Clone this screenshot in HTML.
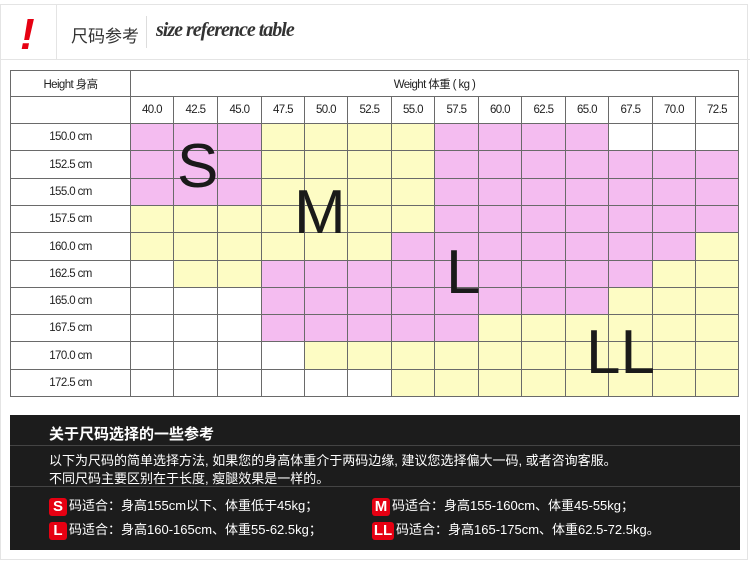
<!DOCTYPE html>
<html><head><meta charset="utf-8"><style>
body{margin:0;width:750px;height:565px;background:#fff;position:relative;overflow:hidden;font-family:"Liberation Sans","Noto Sans CJK SC",sans-serif;}
.frame{position:absolute;left:0;top:4px;width:748px;height:556px;border:1px solid #e4e4e4;box-sizing:border-box}
.hdrline{position:absolute;left:0;top:59px;width:750px;height:1px;background:#e4e4e4}
.c{position:absolute;box-sizing:border-box;border-right:1px solid #6a6a6a;border-bottom:1px solid #6a6a6a;font-size:11.5px;color:#222;display:flex;align-items:center;justify-content:center;letter-spacing:-0.6px}
.big{position:absolute;font-size:62px;color:#1a1a1a;line-height:1}
.dark{position:absolute;left:10px;top:415px;width:730px;height:135px;background:#1c1c1c;color:#fff}
.tag{display:inline-block;background:#e60012;color:#fff;font-weight:bold;border-radius:3px;width:18px;height:18px;text-align:center;line-height:18px;font-size:15px;margin-right:2px;vertical-align:middle}
.ln{position:absolute;font-size:13px;white-space:nowrap}
</style></head><body>
<div class="frame"></div>
<div class="hdrline"></div>
<div style="position:absolute;left:20px;top:13px;font-size:44px;color:#e60012;font-weight:bold;font-style:italic;line-height:1">!</div>
<div style="position:absolute;left:56px;top:5px;width:1px;height:54px;background:#e4e4e4"></div>
<div style="position:absolute;left:71px;top:22px;font-size:17px;color:#333">尺码参考</div>
<div style="position:absolute;left:146px;top:16px;width:1px;height:32px;background:#ddd"></div>
<div style="position:absolute;left:156px;top:19px;font-size:20px;color:#333;font-style:italic;font-weight:bold;font-family:'Liberation Serif',serif;letter-spacing:-1px">size reference table</div>
<div id="t"></div>
<div class="big" style="left:177px;top:136px">S</div>
<div class="big" style="left:294px;top:182px">M</div>
<div class="big" style="left:446px;top:242px">L</div>
<div class="big" style="left:586px;top:322px">LL</div>
<div class="dark">
<div style="position:absolute;left:39px;top:8px;font-size:15px;font-weight:bold">关于尺码选择的一些参考</div>
<div style="position:absolute;left:0;top:30px;width:730px;height:1px;background:#444"></div>
<div class="ln" style="left:39px;top:35px">以下为尺码的简单选择方法, 如果您的身高体重介于两码边缘, 建议您选择偏大一码, 或者咨询客服。</div>
<div class="ln" style="left:39px;top:53px">不同尺码主要区别在于长度, 瘦腿效果是一样的。</div>
<div style="position:absolute;left:0;top:71px;width:730px;height:1px;background:#444"></div>
<div class="ln" style="left:39px;top:80px"><span class="tag">S</span>码适合：身高155cm以下、体重低于45kg；</div>
<div class="ln" style="left:39px;top:104px"><span class="tag">L</span>码适合：身高160-165cm、体重55-62.5kg；</div>
<div class="ln" style="left:362px;top:80px"><span class="tag">M</span>码适合：身高155-160cm、体重45-55kg；</div>
<div class="ln" style="left:362px;top:104px"><span class="tag" style="width:22px">LL</span>码适合：身高165-175cm、体重62.5-72.5kg。</div>
</div>
<script>
var xs=[131,174,218,262,305,348,392,435,479,522,566,609,653,696,739];
var w=["40.0","42.5","45.0","47.5","50.0","52.5","55.0","57.5","60.0","62.5","65.0","67.5","70.0","72.5"];
var h=["150.0","152.5","155.0","157.5","160.0","162.5","165.0","167.5","170.0","172.5"];
var pat=["PPPYYYYPPPPWWW","PPPYYYYPPPPPPP","PPPYYYYPPPPPPP","YYYYYYYPPPPPPP","YYYYYYPPPPPPPY","WYYPPPPPPPPPYY","WWWPPPPPPPPYYY","WWWPPPPPYYYYYY","WWWWYYYYYYYYYY","WWWWWWYYYYYYYY"];
var col={P:"#f4bcf0",Y:"#fdfcc4",W:"#fff"};
var s="";
function c(x,y,ww,hh,bg,t,extra){s+='<div class="c" style="left:'+x+'px;top:'+y+'px;width:'+ww+'px;height:'+hh+'px;background:'+bg+';'+(extra||'')+'">'+t+'</div>';}
c(10,70,121,27,"#fff","Height 身高","border-left:1px solid #6a6a6a;border-top:1px solid #6a6a6a;");
c(131,70,608,27,"#fff","Weight 体重 ( kg )","border-top:1px solid #6a6a6a;");
c(10,97,121,27,"#fff","","border-left:1px solid #6a6a6a;");
for(var j=0;j<14;j++)c(xs[j],97,xs[j+1]-xs[j],27,"#fff",w[j]);
for(var i=0;i<10;i++){var y=Math.round(124+i*27.3),y2=Math.round(124+(i+1)*27.3);
c(10,y,121,y2-y,"#fff",h[i]+" cm","border-left:1px solid #6a6a6a;");
for(var j=0;j<14;j++)c(xs[j],y,xs[j+1]-xs[j],y2-y,col[pat[i][j]],"");}
document.getElementById("t").innerHTML=s;
</script>
</body></html>
